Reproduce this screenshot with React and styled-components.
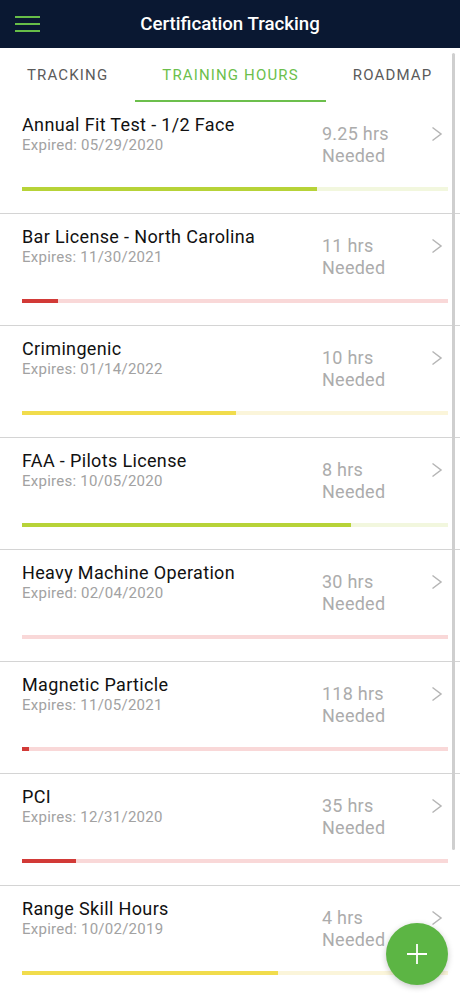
import React from "react";
import styled, { createGlobalStyle } from "styled-components";

const GlobalStyle = createGlobalStyle`
  html, body { margin: 0; padding: 0; background: #fff; }
  body { font-family: Roboto, "Noto Sans", Arial, sans-serif; -webkit-font-smoothing: antialiased; }
  * { box-sizing: border-box; }
`;

const Screen = styled.div`
  position: relative;
  width: 460px;
  height: 996px;
  overflow: hidden;
  background: #fff;
`;

const Header = styled.header`
  height: 48px;
  background: #0a1832;
  display: flex;
  align-items: center;
  position: relative;
`;

const MenuButton = styled.button`
  width: 56px;
  height: 48px;
  border: 0;
  background: transparent;
  padding: 0 0 0 15px;
  display: flex;
  flex-direction: column;
  justify-content: center;
  gap: 5px;
`;

const MenuLine = styled.span`
  display: block;
  width: 25px;
  height: 2px;
  background: #67bd48;
`;

const Title = styled.h1`
  position: absolute;
  left: 0;
  right: 0;
  text-align: center;
  margin: 0;
  pointer-events: none;
  color: #fff;
  font-family: Roboto, sans-serif;
  font-weight: 500;
  font-size: 18.7px;
  line-height: 49px;
`;

const Tabs = styled.nav`
  display: flex;
  height: 54px;
  background: #fff;
`;

const Tab = styled.div`
  flex: none;
  padding: 2px 27px 0;
  display: flex;
  align-items: center;
  justify-content: center;
  height: 54px;
  font-family: Roboto, sans-serif;
  font-size: 15px;
  letter-spacing: 1.15px;
  text-transform: uppercase;
  color: ${(p) => (p.$active ? "#6cbf4c" : "#5b5b5b")};
  border-bottom: 2px solid ${(p) => (p.$active ? "#6cbf4c" : "transparent")};
`;

const List = styled.div`
  display: flex;
  flex-direction: column;
`;

const Row = styled.div`
  padding: 12px 12px 22px 22px;
  border-bottom: 1px solid #d4d4d4;
`;

const TopLine = styled.div`
  display: flex;
  align-items: flex-start;
`;

const Info = styled.div`
  flex: 1;
  min-width: 0;
`;

const Name = styled.div`
  font-size: 18px;
  letter-spacing: 0.35px;
  line-height: 22px;
  color: #111;
`;

const DateText = styled.div`
  font-size: 15px;
  letter-spacing: 0.25px;
  line-height: 18px;
  color: #a2a2a2;
`;

const Hours = styled.div`
  flex: none;
  width: 109px;
  margin-top: 9px;
  font-size: 18px;
  letter-spacing: 0.25px;
  line-height: 22px;
  color: #acacac;
`;

const Chevron = styled.svg`
  flex: none;
  margin-top: 12px;
  margin-right: 5px;
`;

const Track = styled.div`
  margin-top: 20px;
  height: 4px;
  background: ${(p) => p.$track};
  display: flex;
`;

const Fill = styled.div`
  height: 100%;
  background: ${(p) => p.$fill};
`;

const ScrollThumb = styled.div`
  position: absolute;
  left: 452px;
  top: 53px;
  width: 3px;
  height: 797px;
  background: #cfcfcf;
  border-radius: 2px;
`;

const Fab = styled.button`
  position: absolute;
  left: 386px;
  top: 923px;
  width: 62px;
  height: 62px;
  border-radius: 50%;
  border: 0;
  background: #5cb544;
  box-shadow: 0 2px 6px rgba(0, 0, 0, 0.22);
  display: flex;
  align-items: center;
  justify-content: center;
  padding: 0;
`;

const colors = {
  green: { fill: "#b7d338", track: "#f2f7de" },
  red: { fill: "#d23a37", track: "#f9d8d8" },
  yellow: { fill: "#f1dc4c", track: "#fbf5da" },
};

const items = [
  { name: "Annual Fit Test - 1/2 Face", date: "Expired: 05/29/2020", hrs: "9.25 hrs", c: "green", p: 0.693 },
  { name: "Bar License - North Carolina", date: "Expires: 11/30/2021", hrs: "11 hrs", c: "red", p: 0.085 },
  { name: "Crimingenic", date: "Expires: 01/14/2022", hrs: "10 hrs", c: "yellow", p: 0.502 },
  { name: "FAA - Pilots License", date: "Expires: 10/05/2020", hrs: "8 hrs", c: "green", p: 0.772 },
  { name: "Heavy Machine Operation", date: "Expired: 02/04/2020", hrs: "30 hrs", c: "red", p: 0 },
  { name: "Magnetic Particle", date: "Expires: 11/05/2021", hrs: "118 hrs", c: "red", p: 0.017 },
  { name: "PCI", date: "Expires: 12/31/2020", hrs: "35 hrs", c: "red", p: 0.127 },
  { name: "Range Skill Hours", date: "Expired: 10/02/2019", hrs: "4 hrs", c: "yellow", p: 0.601 },
];

export default function App() {
  return (
    <Screen>
      <GlobalStyle />
      <Header>
        <MenuButton aria-label="menu">
          <MenuLine />
          <MenuLine />
          <MenuLine />
        </MenuButton>
        <Title>Certification Tracking</Title>
      </Header>
      <Tabs>
        <Tab>Tracking</Tab>
        <Tab $active>Training Hours</Tab>
        <Tab>Roadmap</Tab>
      </Tabs>
      <List>
        {items.map((it) => (
          <Row key={it.name}>
            <TopLine>
              <Info>
                <Name>{it.name}</Name>
                <DateText>{it.date}</DateText>
              </Info>
              <Hours>
                {it.hrs}
                <br />
                Needed
              </Hours>
              <Chevron width="12" height="16" viewBox="0 0 12 16">
                <path d="M1.5 1.5 L10 8 L1.5 14.5" fill="none" stroke="#b5b5b5" strokeWidth="1.5" />
              </Chevron>
            </TopLine>
            <Track $track={colors[it.c].track}>
              <Fill $fill={colors[it.c].fill} style={{ width: `${it.p * 100}%` }} />
            </Track>
          </Row>
        ))}
      </List>
      <ScrollThumb />
      <Fab aria-label="add">
        <svg width="22" height="22" viewBox="0 0 22 22">
          <path d="M11 1 V21 M1 11 H21" stroke="#fff" strokeWidth="1.8" />
        </svg>
      </Fab>
    </Screen>
  );
}
